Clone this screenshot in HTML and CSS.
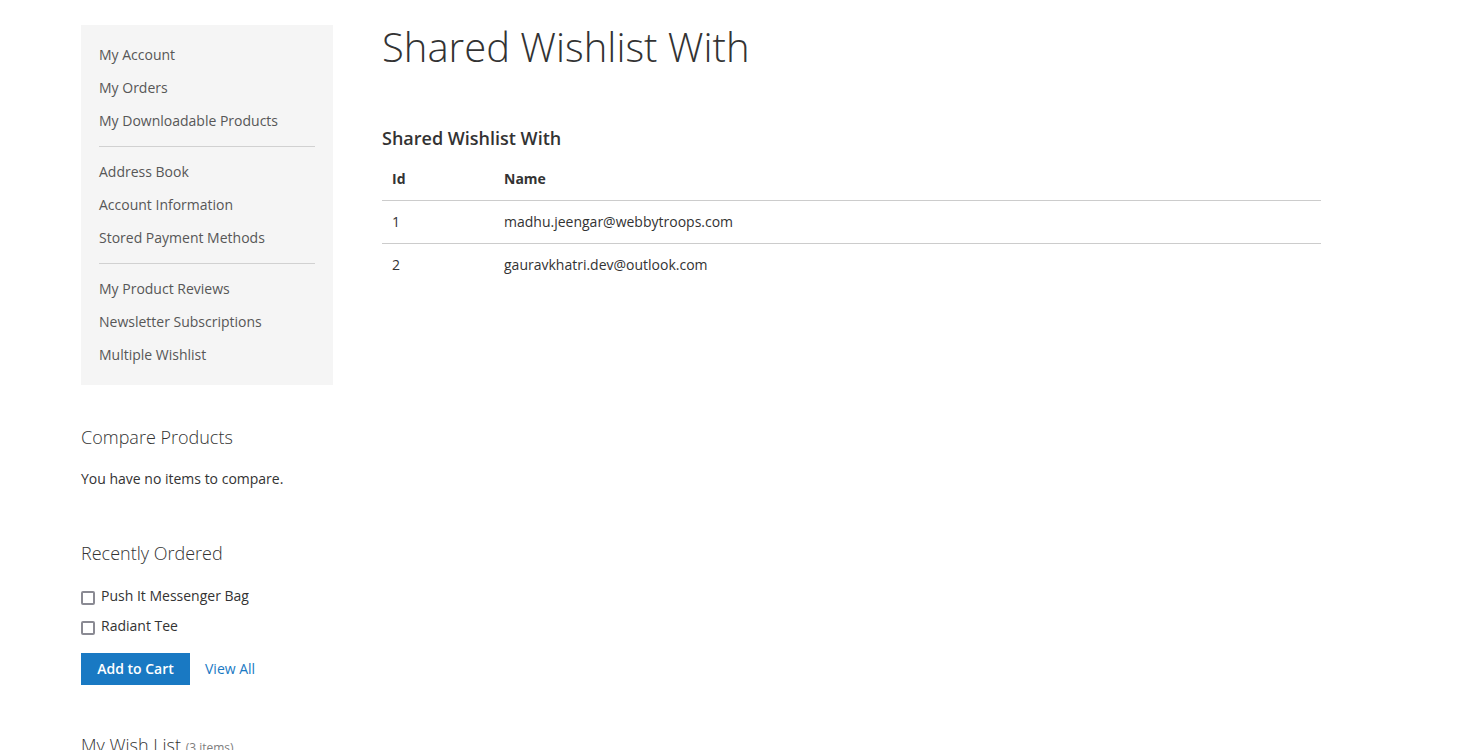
FILE: index.html
```html
<!DOCTYPE html>
<html lang="en">
<head>
<meta charset="utf-8">
<title>Shared Wishlist With</title>
<link rel="stylesheet" href="styles.css">
</head>
<body>
<div class="columns">
  <aside class="sidebar">
    <nav class="account-nav">
      <ul class="nav-list">
        <li class="nav-item"><a href="#">My Account</a></li>
        <li class="nav-item"><a href="#">My Orders</a></li>
        <li class="nav-item"><a href="#">My Downloadable Products</a></li>
        <li class="delimiter"></li>
        <li class="nav-item"><a href="#">Address Book</a></li>
        <li class="nav-item"><a href="#">Account Information</a></li>
        <li class="nav-item"><a href="#">Stored Payment Methods</a></li>
        <li class="delimiter"></li>
        <li class="nav-item"><a href="#">My Product Reviews</a></li>
        <li class="nav-item"><a href="#">Newsletter Subscriptions</a></li>
        <li class="nav-item"><a href="#">Multiple Wishlist</a></li>
      </ul>
    </nav>

    <section class="block block-compare">
      <h2 class="block-title">Compare Products</h2>
      <p class="block-text">You have no items to compare.</p>
    </section>

    <section class="block block-reorder">
      <h2 class="block-title">Recently Ordered</h2>
      <ul class="reorder-list">
        <li class="reorder-item"><input type="checkbox" class="reorder-check"><span>Push It Messenger Bag</span></li>
        <li class="reorder-item"><input type="checkbox" class="reorder-check"><span>Radiant Tee</span></li>
      </ul>
      <div class="actions">
        <button class="btn-primary" type="button">Add to Cart</button>
        <a href="#" class="link-view">View All</a>
      </div>
    </section>

    <section class="block block-wishlist">
      <h2 class="block-title">My Wish List <span class="counter">(3 items)</span></h2>
    </section>
  </aside>

  <main class="main">
    <h1 class="page-title">Shared Wishlist With</h1>
    <div class="shared-block">
      <h2 class="table-caption">Shared Wishlist With</h2>
      <table class="data-table">
        <thead>
          <tr><th class="col-id">Id</th><th>Name</th></tr>
        </thead>
        <tbody>
          <tr><td class="col-id">1</td><td>madhu.jeengar@webbytroops.com</td></tr>
          <tr><td class="col-id">2</td><td>gauravkhatri.dev@outlook.com</td></tr>
        </tbody>
      </table>
    </div>
  </main>
</div>
</body>
</html>
```

FILE: styles.css
```css
html, body {
  margin: 0;
  padding: 0;
  background: #fff;
}

body {
  font-family: "Open Sans", "Liberation Sans", sans-serif;
  font-size: 14px;
  line-height: 20px;
  color: #333;
  overflow: hidden;
  height: 750px;
}

.columns {
  display: flex;
  align-items: flex-start;
  gap: 49px;
  padding: 25px 0 0 81px;
}

/* Sidebar */
.sidebar {
  width: 252px;
  flex: none;
}

.account-nav {
  background: #f5f5f5;
  padding: 15px 0;
  margin-bottom: 42px;
}

.nav-list {
  list-style: none;
  margin: 0;
  padding: 0;
  display: flex;
  flex-direction: column;
  gap: 3px;
}

.nav-item a {
  display: block;
  padding: 5px 18px 5px 15px;
  border-left: 3px solid transparent;
  color: #575757;
  text-decoration: none;
  line-height: 20px;
}

.delimiter {
  height: 1px;
  background: #d1d1d1;
  margin: 7px 18px;
}

.block {
  margin: 0;
}

.block-title {
  margin: 0 0 22px;
  font-size: 18px;
  font-weight: 300;
  line-height: 20px;
  color: #333;
}

.block-text {
  margin: 0;
}

.block-compare {
  margin-bottom: 54px;
}

.block-reorder .block-title {
  margin-bottom: 23px;
}

.reorder-list {
  list-style: none;
  margin: 0;
  padding: 0;
  display: flex;
  flex-direction: column;
  gap: 10px;
}

.reorder-item {
  display: flex;
  align-items: center;
  line-height: 20px;
}

.reorder-check {
  appearance: none;
  -webkit-appearance: none;
  box-sizing: border-box;
  width: 14px;
  height: 14px;
  margin: 3px 6px 0 0;
  border: 2px solid #8a8a93;
  border-radius: 2px;
  background: #fff;
  flex: none;
}

.actions {
  display: flex;
  align-items: center;
  gap: 15px;
  margin-top: 17px;
  margin-bottom: 50px;
}

.btn-primary {
  background: #1979c3;
  border: 1px solid #1979c3;
  color: #fff;
  font-family: "Open Sans", "Liberation Sans", sans-serif;
  font-size: 14px;
  font-weight: 600;
  line-height: 18px;
  padding: 6px 15px;
  border-radius: 0;
  width: 109px;
  height: 32px;
}

.link-view {
  color: #1979c3;
  text-decoration: none;
}

.counter {
  font-size: 12px;
  color: #7d7d7d;
  font-weight: 400;
}

/* Main */
.main {
  width: 939px;
  flex: none;
}

.page-title {
  margin: 0;
  font-size: 40px;
  font-weight: 300;
  line-height: 44px;
  color: #333;
}

.shared-block {
  margin-top: 59px;
}

.table-caption {
  margin: 0 0 16px;
  font-size: 18px;
  font-weight: 600;
  line-height: 20px;
  color: #333;
}

.data-table {
  width: 100%;
  border-collapse: collapse;
}

.data-table th {
  text-align: left;
  font-weight: 700;
  padding: 5px 10px 11px;
  line-height: 20px;
  border-bottom: 1px solid #ccc;
}

.data-table td {
  padding: 11px 10px;
  line-height: 20px;
  border-bottom: 1px solid #ccc;
}

.data-table tbody tr:last-child td {
  border-bottom: none;
}

.data-table .col-id {
  width: 92px;
}
```
